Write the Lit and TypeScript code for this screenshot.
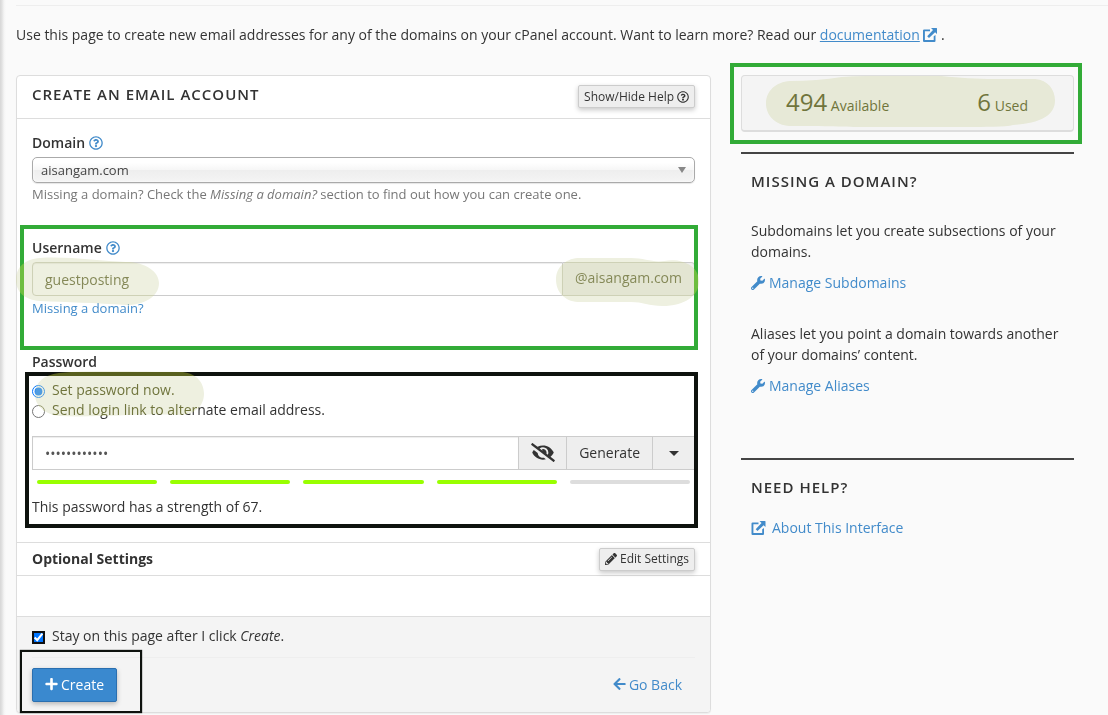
import { LitElement, html, svg, css } from "lit";
import { customElement, property, state } from "lit/decorators.js";

interface Glyph {
  box: string;
  path: string;
}

const GLYPHS: Record<string, Glyph> = {
  help: {
    box: "0 0 512 512",
    path: "M256 8C119.043 8 8 119.083 8 256c0 136.997 111.043 248 248 248s248-111.003 248-248C504 119.083 392.957 8 256 8zm0 448c-110.532 0-200-89.431-200-200 0-110.495 89.472-200 200-200 110.491 0 200 89.471 200 200 0 110.53-89.431 200-200 200zm107.244-255.2c0 67.052-72.421 68.084-72.421 92.863V300c0 6.627-5.373 12-12 12h-45.647c-6.627 0-12-5.373-12-12v-8.659c0-35.745 27.1-50.034 47.579-61.516 17.561-9.845 28.324-16.541 28.324-29.579 0-17.246-21.999-28.693-39.784-28.693-23.189 0-33.894 10.977-48.942 29.969-4.057 5.12-11.46 6.071-16.666 2.124l-27.824-21.098c-5.107-3.872-6.251-11.066-2.644-16.363C184.846 131.491 214.94 112 261.794 112c49.071 0 101.45 38.304 101.45 88.8zM298 368c0 23.159-18.841 42-42 42s-42-18.841-42-42 18.841-42 42-42 42 18.841 42 42z",
  },
  wrench: {
    box: "0 0 512 512",
    path: "M507.73 109.1c-2.24-9.03-13.54-12.09-20.12-5.51l-74.36 74.36-67.88-11.31-11.31-67.88 74.36-74.36c6.62-6.62 3.43-17.9-5.66-20.16-47.38-11.74-99.55.91-136.58 37.93-39.64 39.64-50.55 97.1-34.05 147.2L18.74 402.76c-24.99 24.99-24.99 65.51 0 90.5 24.99 24.99 65.51 24.99 90.5 0l213.21-213.21c50.12 16.71 107.47 5.68 147.37-34.22 37.07-37.07 49.7-89.32 37.91-136.73zM64 472c-13.25 0-24-10.75-24-24 0-13.26 10.75-24 24-24s24 10.74 24 24c0 13.25-10.75 24-24 24z",
  },
  plus: {
    box: "0 0 448 512",
    path: "M416 208H272V64c0-17.67-14.33-32-32-32h-32c-17.67 0-32 14.33-32 32v144H32c-17.67 0-32 14.33-32 32v32c0 17.67 14.33 32 32 32h144v144c0 17.67 14.33 32 32 32h32c17.67 0 32-14.33 32-32V304h144c17.67 0 32-14.33 32-32v-32c0-17.67-14.33-32-32-32z",
  },
  back: {
    box: "0 0 448 512",
    path: "M257.5 445.1l-22.2 22.2c-9.4 9.4-24.6 9.4-33.9 0L7 273c-9.4-9.4-9.4-24.6 0-33.9L201.4 44.7c9.4-9.4 24.6-9.4 33.9 0l22.2 22.2c9.5 9.5 9.3 25-.4 34.3L136.6 216H424c13.3 0 24 10.7 24 24v32c0 13.3-10.7 24-24 24H136.6l120.5 114.8c9.8 9.3 10 24.8.4 34.3z",
  },
  pencil: {
    box: "0 0 512 512",
    path: "M497.9 142.1l-46.1 46.1c-4.7 4.7-12.3 4.7-17 0l-111-111c-4.7-4.7-4.7-12.3 0-17l46.1-46.1c18.7-18.7 49.1-18.7 67.9 0l60.1 60.1c18.8 18.7 18.8 49.1 0 67.9zM284.2 99.8L21.6 362.4.4 483.9c-2.9 16.4 11.4 30.6 27.8 27.8l121.5-21.3 262.6-262.6c4.7-4.7 4.7-12.3 0-17l-111-111c-4.8-4.7-12.4-4.7-17.1 0zM124.1 339.9c-5.5-5.5-5.5-14.3 0-19.8l154-154c5.5-5.5 14.3-5.5 19.8 0s5.5 14.3 0 19.8l-154 154c-5.5 5.5-14.3 5.5-19.8 0zM88 424h48v36.3l-64.5 11.3-31.1-31.1L51.8 376H88v48z",
  },
  hidden: {
    box: "0 0 640 512",
    path: "M320 400c-75.85 0-137.25-58.71-142.9-133.11L72.2 185.82c-13.79 17.3-26.48 35.59-36.72 55.59a32.35 32.35 0 0 0 0 29.19C89.71 376.41 197.07 448 320 448c26.91 0 52.87-4 77.89-10.46L346 397.39a144.13 144.13 0 0 1-26 2.61zm313.82 58.1l-110.55-85.44a331.25 331.25 0 0 0 81.25-102.07 32.35 32.35 0 0 0 0-29.19C550.29 135.59 442.93 64 320 64a308.15 308.15 0 0 0-147.32 37.7L45.46 3.37A16 16 0 0 0 23 6.18L3.37 31.45A16 16 0 0 0 6.18 53.9l588.36 454.73a16 16 0 0 0 22.46-2.81l19.64-25.27a16 16 0 0 0-2.82-22.45zm-183.72-142l-39.3-30.38A94.75 94.75 0 0 0 416 256a94.76 94.76 0 0 0-121.31-92.21A47.65 47.65 0 0 1 304 192a46.64 46.64 0 0 1-1.54 10l-73.61-56.89A142.31 142.31 0 0 1 320 112a143.92 143.92 0 0 1 144 144c0 21.63-5.29 41.79-13.9 60.11z",
  },
  external: {
    box: "0 0 14 14",
    path: "M0 2.6Q0 1.5 1.1 1.5H7V3.3H1.9V12.1H10.7V8.3L12.5 7V12.9Q12.5 14 11.4 14H1.1Q0 14 0 12.9ZM8 0H13.5Q14 0 14 .5V6L12.1 4.2L6 10L4.2 8.2L10 2Z",
  },
};

@customElement("ui-icon")
export class UiIcon extends LitElement {
  @property() name = "help";
  static styles = css`
    :host { display: inline-block; width: 14px; height: 14px; vertical-align: -2px; }
    svg { display: block; width: 100%; height: 100%; fill: currentColor; }
  `;
  render() {
    const g = GLYPHS[this.name];
    return html`<svg viewBox=${g.box} aria-hidden="true">${svg`<path d=${g.path} />`}</svg>`;
  }
}

/* Translucent marker stroke laid over content. */
@customElement("marker-stroke")
export class MarkerStroke extends LitElement {
  @property() box = "0 0 100 40";
  @property() path = "";
  static styles = css`
    :host { display: block; position: absolute; pointer-events: none; }
    svg { display: block; position: absolute; inset: 0; width: 100%; height: 100%; }
    .lift { mix-blend-mode: screen; fill: #555a15; }
    .tint { mix-blend-mode: multiply; fill: #eef0e0; }
  `;
  render() {
    return html`
      <svg class="lift" viewBox=${this.box} preserveAspectRatio="none">${svg`<path d=${this.path} />`}</svg>
      <svg class="tint" viewBox=${this.box} preserveAspectRatio="none">${svg`<path d=${this.path} />`}</svg>
    `;
  }
}

@customElement("app-root")
export class AppRoot extends LitElement {
  @state() private strength = 67;

  static styles = css`
    * { box-sizing: border-box; }
    :host {
      display: block;
      min-height: 100vh;
      box-sizing: border-box;
      padding-top: 5px;
      background: linear-gradient(to right, #d6d6d6 0, #e2e2e2 2px, #f4f4f4 4px, #fafafa 6px);
      color: #333;
      font: 14px/21px "Open Sans", sans-serif;
    }
    a { color: #428bca; text-decoration: none; }
    h2, p { margin: 0; }
    input, select, button { font: inherit; color: inherit; margin: 0; }
    button { cursor: pointer; }
    .intro { margin-left: 16px; padding-top: 18px; border-top: 1px solid #eee; }
    .intro a span { text-decoration: underline; }
    .columns {
      display: grid;
      grid-template-columns: minmax(0, 695fr) minmax(0, 333fr);
      gap: 30px;
      align-items: start;
      padding: 30px 34px 0 16px;
    }
    .title { font-size: 15px; line-height: 18px; padding-bottom: 2px; font-weight: 600; letter-spacing: 1px; text-transform: uppercase; }

    .panel { background: #fff; border: 1px solid #ddd; border-radius: 4px; box-shadow: 0 1px 1px rgba(0, 0, 0, .05); }
    .head { display: flex; justify-content: space-between; align-items: flex-start; padding: 9px 15px; height: 43px; border-bottom: 1px solid #ddd; }
    .small-btn {
      display: flex; align-items: center; gap: 3px; height: 23px; padding: 0 5px;
      font-size: 12px; font-weight: 400; line-height: 18px; background: #eee; border: 1px solid #ccc; border-radius: 2px;
      box-shadow: 0 2px 5px rgba(0, 0, 0, .22);
    }
    .small-btn ui-icon { width: 12px; height: 12px; }
    .form { padding: 13px 15px 0; }
    .group { position: relative; }
    .label { display: flex; align-items: center; gap: 4px; height: 21px; font-weight: 600; }
    .label a { display: flex; }
    .domain { height: 105px; }
    .username { height: 114px; }
    .password { height: 191px; }

    .pick { position: relative; margin-top: 4px; }
    select {
      display: block; width: 100%; height: 26px; padding: 0 8px; appearance: none;
      font-size: 13px; color: #444; border: 1px solid #aaa; border-radius: 5px;
      background: linear-gradient(#fff 20%, #f6f6f6 50%, #eee 52%, #f4f4f4 100%);
      box-shadow: 0 0 3px #fff inset, 0 1px 1px rgba(0, 0, 0, .1);
    }
    .pick::after { content: ""; position: absolute; right: 9px; top: 10px; border: 4px solid transparent; border-top: 6px solid #888; border-bottom: 0; pointer-events: none; }
    .hint { display: block; font-size: 13px; line-height: 20px; color: #777; margin-top: 1px; }
    a.hint { color: #428bca; margin-top: 2px; }

    .combo { display: flex; height: 34px; }
    .combo > * { border: 1px solid #ccc; border-radius: 0; }
    .combo > * + * { border-left: 0; }
    .combo input { flex: 1; min-width: 0; padding: 0 12px; color: #555; background: #fff; outline: 0; box-shadow: inset 0 1px 1px rgba(0, 0, 0, .075); }
    .combo .addon { display: flex; align-items: center; padding: 0 12px 4px; color: #555; background: #eee; }
    .combo button { display: flex; align-items: center; justify-content: center; padding: 0 12px 2px; background: #eee; }
    .combo .eye { width: 48px; }
    .combo .eye ui-icon { flex: none; width: 24px; height: 19px; }
    .combo .more { width: 42px; padding-bottom: 0; }
    .username .combo { margin-top: 4px; }
    .username .combo input { border-radius: 4px 0 0 4px; }
    .username .combo .addon { border-radius: 0 4px 4px 0; }
    .caret { border: 5px solid transparent; border-top-color: #333; border-bottom: 0; }

    .choices { padding-top: 7px; }
    .choice { display: flex; align-items: center; gap: 7px; height: 20px; }
    .choice input { flex: none; width: 13px; height: 13px; margin-top: 4px; }
    .choice input[type="checkbox"] { outline: 2px solid #111; outline-offset: -2px; border-radius: 3px; }
    .password .combo { margin-top: 17px; }
    .meter { display: flex; gap: 13px; padding: 10px 5px 0; }
    .meter i { flex: 1; height: 4px; border-radius: 2px; background: #ddd; }
    .meter i.on { background: #9f0; }
    .note { margin-top: 12px; }

    .optional { display: flex; align-items: center; justify-content: space-between; height: 34px; padding: 0 15px; border: solid #ddd; border-width: 1px 0; font-weight: 700; }
    .optional span { padding-bottom: 2px; }
    .blank { height: 40px; }
    .foot { background: #f4f4f4; border-top: 1px solid #ddd; border-radius: 0 0 4px 4px; padding: 8px 15px 10px; }
    .actions { position: relative; display: flex; align-items: center; justify-content: space-between; margin-top: 12px; padding: 10px 13px 0 0; border-top: 1px solid #eee; }
    .create {
      display: flex; align-items: center; gap: 3px; height: 34px; padding: 0 12px 2px;
      color: #fff; background: #3a89cf; border: 1px solid #2a6fb0; border-radius: 2px;
      box-shadow: 0 2px 5px rgba(0, 0, 0, .26);
    }
    .create ui-icon, .back ui-icon { width: 13px; }
    .back { display: flex; align-items: center; gap: 3px; padding-bottom: 2px; }

    .stats { position: relative; display: flex; justify-content: space-between; padding: 11px 45px 13px 44px; background: #f4f4f4; border: 1px solid #ddd; border-bottom-width: 2px; border-radius: 4px; }
    .stats b { font-size: 24px; line-height: 30px; font-weight: 400; }
    .block { border-top: 2px solid #444; margin-top: 20px; padding: 18px 10px 0; }
    .block p { margin-top: 28px; }
    .block .link { display: flex; align-items: center; gap: 4px; margin-top: 10px; }
    .block p.next { margin-top: 30px; }
    .help { margin-top: 62px; }
    .help .link { margin-top: 19px; gap: 6px; }
    .help ui-icon { width: 15px; }

    .frame { position: absolute; pointer-events: none; }
    .green { border: 4px solid #32ab37; }
    .black { border: 4px solid #0e120e; }
    .stats .frame { inset: -13px -9px -14px -12px; }
    .username .frame { inset: -12px -3px 1px -12px; }
    .password .frame { inset: 21px -3px 14px -7px; }
    .actions .frame { left: -12px; top: -8px; width: 122px; height: 63px; border-width: 2px; box-shadow: 0 0 1px #0e120e; }
    .m-stats { left: 24px; top: 0; width: 289px; height: 52px; }
    .m-user { left: -16px; top: 19px; width: 143px; height: 49px; }
    .m-host { right: -4px; top: 20px; width: 143px; height: 49px; }
    .m-pass { left: 3px; top: 20px; width: 169px; height: 46px; }
  `;

  private labelHelp(text: string, id: string) {
    return html`<div class="label">
      <label for=${id}>${text}</label>
      <a href="#" aria-label="${text} help"><ui-icon name="help"></ui-icon></a>
    </div>`;
  }

  render() {
    const steps = [0, 20, 40, 60, 80];
    return html`
      <p class="intro">
        Use this page to create new email addresses for any of the domains on your cPanel account.
        Want to learn more? Read our
        <a href="#"><span>documentation</span> <ui-icon name="external"></ui-icon></a> .
      </p>
      <div class="columns">
        <form class="panel" @submit=${(e: Event) => e.preventDefault()}>
          <div class="head">
            <h2 class="title">Create an Email Account</h2>
            <button type="button" class="small-btn">Show/Hide Help <ui-icon name="help"></ui-icon></button>
          </div>
          <div class="form">
            <div class="group domain">
              ${this.labelHelp("Domain", "domain")}
              <div class="pick"><select id="domain"><option>aisangam.com</option></select></div>
              <span class="hint">Missing a domain? Check the <em>Missing a domain?</em> section to find out how you can create one.</span>
            </div>
            <div class="group username">
              ${this.labelHelp("Username", "username")}
              <div class="combo">
                <input id="username" type="text" value="guestposting" />
                <span class="addon">@aisangam.com</span>
              </div>
              <a class="hint" href="#">Missing a domain?</a>
              <div class="frame green"></div>
              <marker-stroke class="m-user" box="0 0 143 49" path="M24 2C50 0 85 5 110 6C130 6 143 16 143 27C143 41 128 49 110 49C80 47 50 46 24 45C9 44 0 36 0 24C0 11 9 3 24 2Z"></marker-stroke>
              <marker-stroke class="m-host" box="0 0 145 50" path="M22 1H76C90 1 98 6 110 4C128 1 145 9 145 25C145 40 130 50 108 50C94 50 88 46 76 46H22C9 45 0 36 0 23C0 11 9 2 22 1Z"></marker-stroke>
            </div>
            <div class="group password">
              <div class="label"><label for="password">Password</label></div>
              <div class="choices">
                <label class="choice"><input type="radio" name="how" checked />Set password now.</label>
                <label class="choice"><input type="radio" name="how" />Send login link to alternate email address.</label>
              </div>
              <div class="combo">
                <input id="password" type="password" value="abcdefghijkl" />
                <button type="button" class="eye" aria-label="Show password"><ui-icon name="hidden"></ui-icon></button>
                <button type="button">Generate</button>
                <button type="button" class="more" aria-label="More options"><span class="caret"></span></button>
              </div>
              <div class="meter">${steps.map((s) => html`<i class=${this.strength > s ? "on" : ""}></i>`)}</div>
              <p class="note">This password has a strength of ${this.strength}.</p>
              <div class="frame black"></div>
              <marker-stroke class="m-pass" box="0 0 169 47" path="M24 2C60 -1 110 1 145 1C160 1 169 11 169 23C169 36 160 44 145 45C105 43 60 48 24 46C9 44 0 35 0 24C0 11 9 4 24 2Z"></marker-stroke>
            </div>
          </div>
          <div class="optional">
            <span>Optional Settings</span>
            <button type="button" class="small-btn"><ui-icon name="pencil"></ui-icon> Edit Settings</button>
          </div>
          <div class="blank"></div>
          <div class="foot">
            <label class="choice"><input type="checkbox" checked /><span>Stay on this page after I click <em>Create</em>.</span></label>
            <div class="actions">
              <button class="create"><ui-icon name="plus"></ui-icon> Create</button>
              <a class="back" href="#"><ui-icon name="back"></ui-icon> Go Back</a>
              <div class="frame black"></div>
            </div>
          </div>
        </form>
        <aside>
          <div class="stats">
            <span><b>494</b> Available</span>
            <span><b>6</b> Used</span>
            <div class="frame green"></div>
            <marker-stroke class="m-stats" box="0 0 290 53" path="M24 5C42 5 60 4 76 1C110 -1 150 0 176 0C195 2 210 3 230 3H270C283 4 290 14 290 25C290 40 276 48 248 50C240 52 220 52 200 52H100C80 52 60 51 24 51C9 50 0 40 0 28C0 15 10 6 24 5Z"></marker-stroke>
          </div>
          <section class="block">
            <h2 class="title">Missing a Domain?</h2>
            <p>Subdomains let you create subsections of your domains.</p>
            <a class="link" href="#"><ui-icon name="wrench"></ui-icon>Manage Subdomains</a>
            <p class="next">Aliases let you point a domain towards another of your domains’ content.</p>
            <a class="link" href="#"><ui-icon name="wrench"></ui-icon>Manage Aliases</a>
          </section>
          <section class="block help">
            <h2 class="title">Need Help?</h2>
            <a class="link" href="#"><ui-icon name="external"></ui-icon>About This Interface</a>
          </section>
        </aside>
      </div>
    `;
  }
}
